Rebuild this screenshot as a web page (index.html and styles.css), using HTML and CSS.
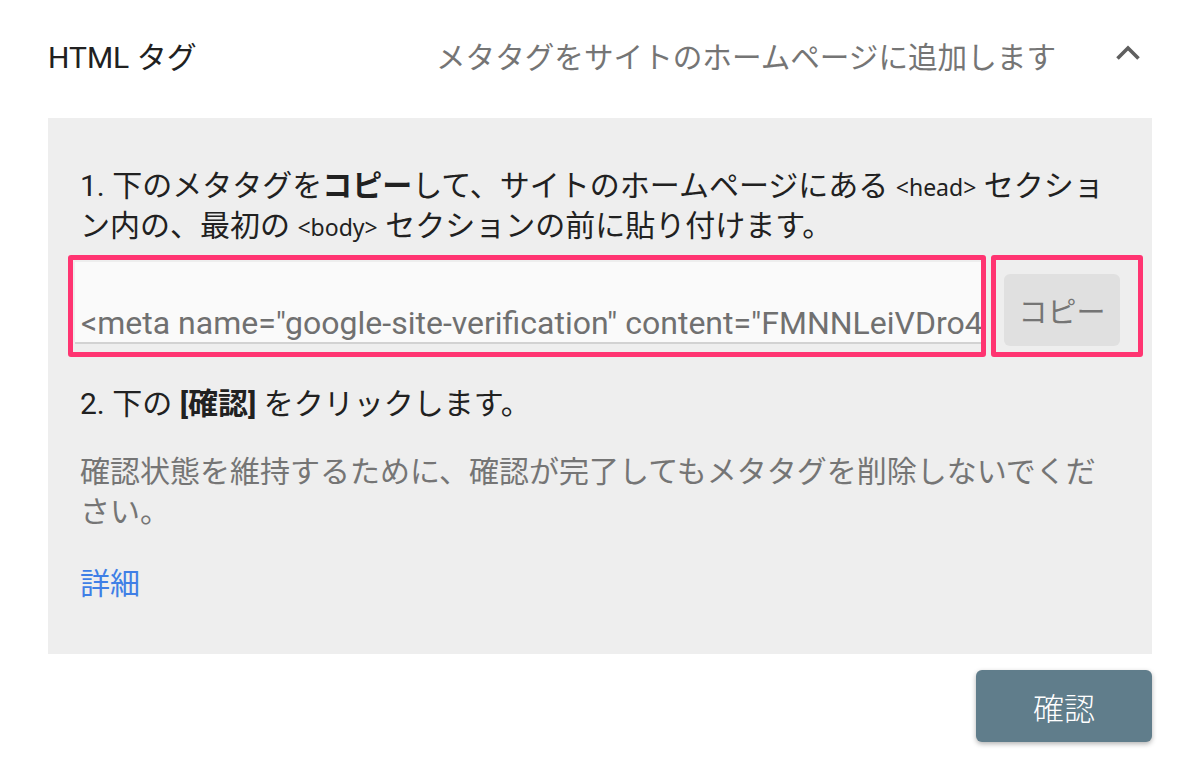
FILE: index.html
```html
<!DOCTYPE html>
<html lang="ja">
<head>
<meta charset="utf-8">
<title>HTML タグ</title>
<link rel="stylesheet" href="styles.css">
</head>
<body>
<div class="card">
  <div class="header">
    <div class="title">HTML タグ</div>
    <div class="subtitle">メタタグをサイトのホームページに追加します</div>
    <div class="chevron">
      <svg width="24" height="16" viewBox="0 0 24 16"><polyline points="1.5,13.5 12,3 22.5,13.5" fill="none" stroke="#5f5f5f" stroke-width="3.6"/></svg>
    </div>
  </div>
  <div class="panel">
    <p class="step">1. 下のメタタグを<b>コピー</b>して、サイトのホームページにある <span class="code">&lt;head&gt;</span> セクション内の、最初の <span class="code">&lt;body&gt;</span> セクションの前に貼り付けます。</p>
    <div class="copy-row">
      <div class="field-wrap">
        <div class="field"><span class="field-text">&lt;meta name="google-site-verification" content="FMNNLeiVDro4zXq" /&gt;</span></div>
      </div>
      <div class="btn-wrap">
        <button class="copy-btn">コピー</button>
      </div>
    </div>
    <p class="step step2">2. 下の <b>[確認]</b> をクリックします。</p>
    <p class="note">確認状態を維持するために、確認が完了してもメタタグを削除しないでください。</p>
    <a class="link" href="#">詳細</a>
  </div>
  <div class="actions">
    <button class="confirm">確認</button>
  </div>
</div>
</body>
</html>
```

FILE: styles.css
```css
html, body {
  margin: 0;
  padding: 0;
  background: #ffffff;
}
body {
  font-family: Roboto, "Noto Sans CJK JP", sans-serif;
  color: #212121;
  width: 1200px;
  height: 784px;
  overflow: hidden;
}
.card {
  display: flex;
  flex-direction: column;
}
.header {
  height: 116px;
  display: flex;
  align-items: center;
  padding: 0 60px 0 48px;
  margin-top: -3px;
}
.title {
  font-size: 30px;
  color: #212121;
  flex: 1;
}
.subtitle {
  font-size: 29.6px;
  color: #757575;
}
.chevron {
  width: 24px;
  height: 16px;
  margin-left: 60px;
  display: flex;
  margin-top: -4px;
}
.panel {
  margin: 5px 48px 0 48px;
  background: #eeeeee;
  padding: 48px 32px 50px 32px;
  font-size: 30px;
  line-height: 40px;
  display: flex;
  flex-direction: column;
  align-items: flex-start;
}
.step {
  margin: 0;
  color: #212121;
}
.step b {
  font-weight: 700;
}
.code {
  font-family: "Noto Sans", sans-serif;
  font-size: 23px;
  line-height: 1;
}
.copy-row {
  align-self: stretch;
  display: flex;
  gap: 5px;
  margin: 9px -23px 0 -12px;
}
.field-wrap {
  flex: 1;
  border: 5px solid #ff3471;
  border-radius: 3px;
  padding: 2px 0 8px 2px;
  min-width: 0;
}
.field {
  background: #fafafa;
  border-bottom: 2px solid #d2d2d2;
  display: flex;
  align-items: flex-end;
  overflow: hidden;
  padding: 0 0 1px 6px;
  box-sizing: border-box;
  height: 82px;
}
.field-text {
  font-family: Roboto, sans-serif;
  font-size: 32px;
  line-height: 36px;
  color: #707070;
  white-space: nowrap;
}
.btn-wrap {
  width: 152px;
  box-sizing: border-box;
  border: 5px solid #ff3471;
  border-radius: 3px;
  padding: 14px 0 6px 8px;
}
.copy-btn {
  width: 116px;
  height: 72px;
  border: none;
  border-radius: 6px;
  background: #e0e0e0;
  color: #757575;
  font-family: "Noto Sans CJK JP", sans-serif;
  font-size: 29px;
  padding: 0;
}
.step2 {
  margin-top: 27px;
}
.note {
  margin: 28px 0 0 0;
  color: #757575;
}
.link {
  margin-top: 32px;
  color: #3f7fe6;
  text-decoration: none;
}
.actions {
  display: flex;
  justify-content: flex-end;
  padding: 16px 48px 0 0;
}
.confirm {
  width: 176px;
  height: 72px;
  border: none;
  border-radius: 6px;
  background: #607d8b;
  color: #ffffff;
  font-family: "Noto Sans CJK JP", sans-serif;
  font-size: 31px;
  font-weight: 300;
  box-shadow: 0 2px 5px rgba(0, 0, 0, 0.3);
  padding: 0;
}
```
